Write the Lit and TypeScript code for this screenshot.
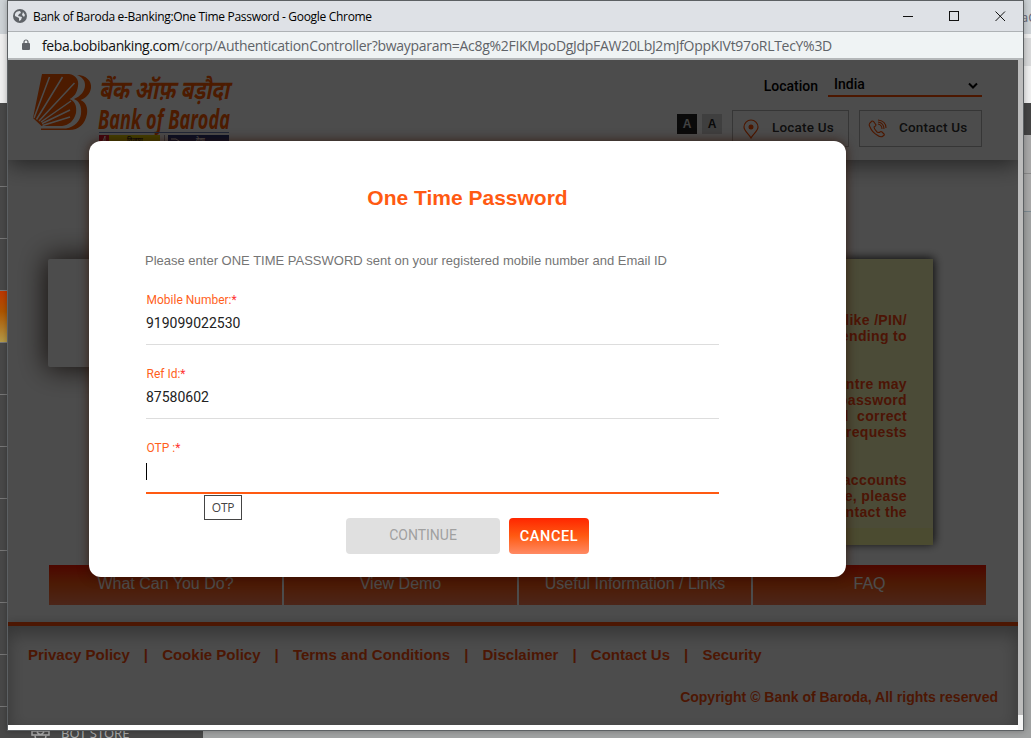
import { LitElement, html, css } from "lit";
import { customElement } from "lit/decorators.js";

@customElement("bank-logo")
class BankLogo extends LitElement {
  static styles = css`
    :host { display: block; width: 210px; height: 84px; }
    svg { display: block; overflow: visible; }
    .hi { font: italic 700 26px "Noto Sans Devanagari", "Noto Sans", "Lohit Devanagari", sans-serif; }
    .en { font: italic 700 26px "Open Sans", "Noto Sans", sans-serif; }
    .tag { font: 700 6px "Noto Sans", sans-serif; }
  `;
  render() {
    return html`<svg width="210" height="84" viewBox="0 0 210 84">
      <path fill="#ff5a00" d="M10 0H37C44 1 47 6 46 12C45 19 42 23 37.500 25C43 27 45 32 44 39C42 47 37 51 30 52H9.500L1 44Z" />
      <path fill="#ff5a00" d="M45 1C54 1 60 7 59 14C58 20 54 24 48.500 26C54 28 56 34 55 40C53 50 47 56 37 56H9V54.500H34C43 53 48 47 49 40C50 32 47 27 42 25C49 22 53 17 53 11C53 6 50 3 45 1Z" />
      <path d="M2 44L17.500 3M4.500 45.500L30.500 3M7 47L42.500 9M9 48L39 27M10 49.500L38 36M10.500 51.500L38 43" stroke="#fff" stroke-width="1.500" fill="none" />
      <text class="hi" x="67" y="24.500" fill="#ff5a00" textLength="130" lengthAdjust="spacingAndGlyphs">बैंक ऑफ़ बड़ौदा</text>
      <text class="en" x="66" y="55" fill="#ff5a00" textLength="132" lengthAdjust="spacingAndGlyphs">Bank of Baroda</text>
      <path d="M67 58.500H197" stroke="#7082b8" />
      <rect x="67" y="61" width="10" height="9" fill="#e21030" />
      <rect x="77" y="61" width="51" height="9" fill="#e3d800" />
      <path d="M132.500 61V70" stroke="#99a" />
      <rect x="136" y="61" width="61" height="9" fill="#20337d" />
      <text class="tag" x="95" y="68" fill="#222">विजया</text>
      <text class="tag" x="164" y="68" fill="#fff">देना</text>
      <path d="M71 67L73 62V70M139 65H144L150 69M139 68H144" stroke="#fff" fill="none" />
    </svg>`;
  }
}

@customElement("bank-page")
class BankPage extends LitElement {
  static styles = css`
    :host { display: flex; flex-direction: column; height: 665px; width: 1010px; background: #fff; overflow: hidden; font-family: "Liberation Sans", Arial, sans-serif; }
    .head { flex: none; height: 100px; display: flex; justify-content: space-between; box-shadow: 0 4px 22px rgba(0,0,0,.55); padding: 0 36px 0 24px; box-sizing: border-box; }
    bank-logo { margin-top: 14px; }
    .tools { display: flex; flex-direction: column; align-items: flex-end; padding-top: 15px; }
    .loc { display: flex; font: 500 14px "Roboto", sans-serif; color: #000; }
    .loc label { padding: 3px 10px 0 0; }
    .sel { width: 154px; height: 22px; box-sizing: border-box; border-bottom: 2px solid #ff4e00; display: flex; justify-content: space-between; padding: 1px 3px 0 6px; }
    .sel svg { margin-top: 6px; }
    .row { display: flex; margin-top: 13px; }
    .a { width: 20px; height: 20px; margin-top: 4px; font: 700 12px/21px "Liberation Sans", sans-serif; text-align: center; background: #d4d4d4; color: #222; }
    .a.on { background: #222; color: #ddd; margin-right: 5px; }
    .btn { box-sizing: border-box; height: 37px; border: 1px solid #b5b5b5; display: flex; font: 500 13.500px/33px "Roboto", sans-serif; color: #333; letter-spacing: .2px; }
    .b1 { width: 117px; margin-left: 10px; padding-left: 9px; gap: 10px; }
    .b2 { width: 123px; margin-left: 10px; padding-left: 8px; gap: 12px; }
    .btn svg { margin-top: 8px; flex: none; }
    .mid { height: 306px; flex: none; display: flex; justify-content: space-between; padding: 99px 85px 0 40px; box-sizing: content-box; }
    .login { width: 300px; height: 108px; border-radius: 2px; box-shadow: 0 0 28px 2px rgba(40,20,10,.85); background: #fff; }
    .note { width: 250px; height: 286px; background: linear-gradient(#fbfbba 94%, #fbfba2 94%); box-shadow: 1px -1px 9px rgba(0,0,0,.85); box-sizing: border-box; padding: 53px 26px 0 0; color: #ff4713; font-weight: 700; font-size: 14px; line-height: 16px; letter-spacing: .35px; text-align: right; white-space: nowrap; }
    .nav { display: grid; grid-template-columns: 233px 233px 232px 233px; column-gap: 2px; padding: 0 0 0 41px; flex: none; height: 40px; }
    .nav a { background: linear-gradient(#ff1800, #ff5a12 48%, #ff7f55); color: #fff; font-size: 16px; line-height: 37px; text-align: center; }
    .foot { margin-top: 17px; flex: 1; border-top: 4px solid #ff4f0d; color: #ff4f0d; font-weight: 700; box-shadow: inset 0 8px 17px rgba(0,0,0,.3), 0 -2px 8px rgba(0,0,0,.12); }
    .links { display: flex; font-size: 15px; line-height: 18px; padding: 20px 0 0 20px; }
    .sep { width: 32.400px; text-align: center; }
    .copy { text-align: right; padding: 25px 20px 0 0; font-size: 14px; line-height: 16px; }
  `;
  render() {
    const note = ["like /PIN/", "spending to", "", "", "centre may", "password", "and\u00a0 correct", "requests", "", "", "accounts", "case, please", "contact the"];
    const links = ["Privacy Policy", "Cookie Policy", "Terms and Conditions", "Disclaimer", "Contact Us", "Security"];
    return html`
      <div class="head">
        <bank-logo></bank-logo>
        <div class="tools">
          <div class="loc"><label>Location</label><div class="sel"><span>India</span>
            <svg width="12" height="8" viewBox="0 0 12 8"><path d="M2 1.500L6 5.500L10 1.500" fill="none" stroke="#000" stroke-width="2" /></svg></div></div>
          <div class="row">
            <div class="a on">A</div><div class="a">A</div>
            <div class="btn b1"><svg width="20" height="20" viewBox="0 0 20 20" fill="none" stroke="#ff4e00" stroke-width="1.200"><path d="M9 19C7 15 2 12 2 8A7 7 0 0 1 16 8C16 12 11 15 9 19Z" /><circle cx="9" cy="8" r="1.900" fill="#ff4e00" /></svg><span>Locate Us</span></div>
            <div class="btn b2"><svg width="19" height="20" viewBox="0 0 19 20" fill="none" stroke="#ff4e00" stroke-width="1.100"><path d="M3 3Q4 1 6 3L8 6Q8 7 6 8Q6 10 9 13Q11 14 12 13Q13 12 14 13L16 15Q17 16 15 17Q13 19 9 16Q4 13 2 8Q0 5 3 3ZM10 5Q14 6 14 10M10 3Q16 4 16 10M10 1Q18 2 18 9" /></svg><span>Contact Us</span></div>
          </div>
        </div>
      </div>
      <div class="mid"><div class="login"></div><div class="note">${note.map((t) => html`<div>${t || "\u00a0"}</div>`)}</div></div>
      <div class="nav"><a>What Can You Do?</a><a>View Demo</a><a>Useful Information / Links</a><a>FAQ</a></div>
      <div class="foot">
        <div class="links">${links.map((t, i) => html`${i ? html`<span class="sep">|</span>` : ""}<span>${t}</span>`)}</div>
        <div class="copy">Copyright © Bank of Baroda, All rights reserved</div>
      </div>`;
  }
}

@customElement("otp-dialog")
class OtpDialog extends LitElement {
  static styles = css`
    :host { display: flex; flex-direction: column; width: 757px; height: 436px; box-sizing: border-box; background: #fff; border-radius: 12px; box-shadow: 0 0 11px rgba(45,15,0,.75); padding: 0 127px 0 57px; font-family: "Roboto", sans-serif; }
    h1 { margin: 44px 0 0 -57px; width: 757px; font: 700 21px/26px "Liberation Sans", sans-serif; color: #ff5a12; text-align: center; }
    p { margin: 42px 0 0 -1px; font: 13px/16px "Liberation Sans", sans-serif; color: #757575; white-space: nowrap; }
    .f { height: 52px; box-sizing: border-box; border-bottom: 1px solid #ddd; margin-top: 22px; }
    .f.first { margin-top: 24px; }
    .f.act { border-bottom: 2px solid #ff5a12; height: 53px; }
    label { display: block; font-size: 12px; line-height: 14px; color: #ff5f1c; padding-left: .5px; }
    label i { color: #f33; font-style: normal; }
    .v { font-size: 14px; line-height: 17px; margin-top: 8px; color: #222; }
    .caret { width: 1px; height: 17px; background: #000; }
    .btns { display: flex; gap: 9px; margin: 24px 0 0 200px; }
    .btns div { height: 36px; border-radius: 4px; text-align: center; }
    .c1 { width: 154px; background: #e0e0e0; color: #a0a0a0; font-size: 14px; line-height: 35px; }
    .c2 { width: 80px; color: #fff; background: linear-gradient(#ff2600, #ff5a12 50%, #ff8a64); font: 500 14.500px/37px "Roboto"; letter-spacing: .6px; }
    .tip { position: absolute; left: 115px; top: 354px; width: 38px; height: 25px; box-sizing: border-box; border: 1px solid #444; background: #fff; font: 12px/23px "Open Sans", sans-serif; letter-spacing: -.3px; text-align: center; color: #444; }
  `;
  render() {
    return html`<h1>One Time Password</h1>
      <p>Please enter ONE TIME PASSWORD sent on your registered mobile number and Email ID</p>
      <div class="f first"><label>Mobile Number:<i>*</i></label><div class="v">919099022530</div></div>
      <div class="f"><label>Ref Id:<i>*</i></label><div class="v">87580602</div></div>
      <div class="f act"><label>OTP :<i>*</i></label><div class="v caret"></div></div>
      <div class="btns"><div class="c1">CONTINUE</div><div class="c2">CANCEL</div></div>
      <div class="tip">OTP</div>`;
  }
}

@customElement("app-root")
class AppRoot extends LitElement {
  static styles = css`
    :host { display: block; position: relative; width: 1031px; height: 738px; overflow: hidden; background: #a0a2a2; font-family: "Open Sans", sans-serif; }
    .desk { display: flex; justify-content: space-between; height: 738px; }
    .left { width: 203px; display: flex; flex-direction: column; }
    .right { width: 8px; display: flex; flex-direction: column; }
    .tab { height: 34px; background: #cdd2d6; font: 13px/34px "Open Sans"; color: #667; overflow: hidden; flex: none; text-indent: -2px; }
    .bar { height: 69px; background: #efefef; flex: none; }
    .bar.r { background: linear-gradient(#efefef 4px, #d8d9da 4px 32px, #efefef 32px); }
    .cell { height: 51px; flex: none; background: #484848; border-top: 1px solid #777; }
    .cell.one { height: 83px; border: 0; }
    .cell.or { background: linear-gradient(#bd3700, #ad5500 40%, #b59a48); }
    .store { display: flex; align-items: center; gap: 11px; padding-left: 31px; color: #aaa; font: 13px "Noto Sans", sans-serif; }
    .dark { height: 32px; background: #444; flex: none; }
    .rest { flex: 1; background: linear-gradient(#a8a8a8 38px, #8a8a8a 38px 39px, #a8a8a8 39px 76px, #7c8a92 76px 77px, #a0a2a2 77px); }
    .win { position: absolute; left: 7px; top: 0; width: 1017px; height: 731px; box-sizing: border-box; border: 1px solid #5c6063; background: #fff; display: flex; flex-direction: column; box-shadow: 0 0 6px rgba(0,0,0,.3); }
    .title { height: 30px; background: #dee1e6; display: flex; align-items: center; flex: none; font-size: 12px; color: #000; padding-left: 5px; }
    .title span { margin-left: 6px; flex: 1; letter-spacing: -.31px; }
    .title .ctl { margin-right: 17px; }
    .url { height: 29px; box-sizing: border-box; border-top: 1px solid #aeb2b5; border-bottom: 2px solid #b4b7b9; background: #eff3f4; display: flex; align-items: center; flex: none; font-size: 14px; padding-left: 13px; color: #5f6368; letter-spacing: -.3px; }
    .url b { font-weight: 400; color: #111; margin-left: 11px; letter-spacing: -.4px; }
    .body { display: flex; flex: none; height: 670px; }
    .page { width: 1010px; height: 665px; position: relative; }
    .veil { position: absolute; inset: 0; background: rgba(0,0,0,.7); }
    otp-dialog { position: absolute; left: 81px; top: 81px; }
    .sb { width: 5px; height: 670px; background: linear-gradient(#bcbcbc 655px, #f5f5f5 655px); }
  `;
  render() {
    return html`
      <div class="desk">
        <div class="left"><div class="tab"></div><div class="bar"></div><div class="cell one"></div>
          ${[0, 1, 2, 3, 4, 5, 6, 7, 8, 9].map((i) => html`<div class="cell ${i === 2 ? "or" : ""}"></div>`)}
          <div class="cell store"><svg width="19" height="18" viewBox="0 0 19 18" fill="none" stroke="#aaa" stroke-width="1.500"><path d="M1 7H18V11H1ZM4 12L5 16H14L15 12M6 8Q9 13 13 8" /></svg>BOT STORE</div></div>
        <div class="right"><div class="tab">aC</div><div class="bar r"></div><div class="dark"></div><div class="rest"></div></div>
      </div>
      <div class="win">
        <div class="title">
          <svg width="14" height="14" viewBox="0 0 14 14"><circle cx="7" cy="7" r="7" fill="#5f6368" /><path d="M2 5Q3 2 7 2L8 4L6 5L5 7L9 8L8 11L6 12V9L2 7ZM10 3L12 6L11 8L9 6Z" fill="#dee1e6" /></svg>
          <span>Bank of Baroda e-Banking:One Time Password - Google Chrome</span>
          <svg class="ctl" width="103" height="12" viewBox="0 0 103 12" fill="none" stroke="#111"><path d="M0 6.500H10M92.500 1.500L102 11M102 1.500L92.500 11" /><rect x="46.500" y="1.500" width="9" height="9" /></svg>
        </div>
        <div class="url"><svg width="10" height="12" viewBox="0 0 10 12"><rect x="1" y="4" width="8" height="7" rx="1" fill="#5f6368" /><path d="M3 5V3A2 2 0 0 1 7 3V5" fill="none" stroke="#5f6368" stroke-width="1.200" /></svg><b>feba.bobibanking.com</b><span>/corp/AuthenticationController?bwayparam=Ac8g%2FIKMpoDgJdpFAW20LbJ2mJfOppKIVt97oRLTecY%3D</span></div>
        <div class="body"><div class="page"><bank-page></bank-page><div class="veil"></div><otp-dialog></otp-dialog></div><div class="sb"></div></div>
      </div>`;
  }
}
